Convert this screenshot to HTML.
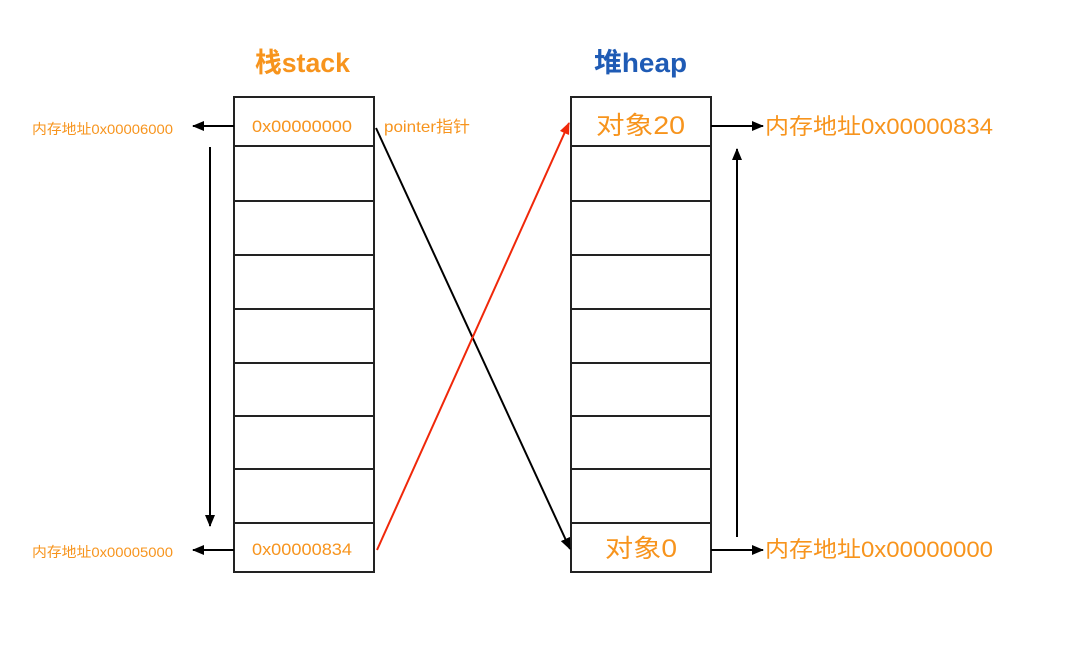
<!DOCTYPE html>
<html><head><meta charset="utf-8"><style>
html,body{margin:0;padding:0;background:#fff;width:1068px;height:654px;overflow:hidden}
svg text{font-family:"Liberation Sans","Noto Sans CJK SC",sans-serif}
</style></head><body>
<svg width="1068" height="654" viewBox="0 0 1068 654" xmlns="http://www.w3.org/2000/svg">
<defs>
<marker id="a" markerWidth="12" markerHeight="10" refX="11" refY="5" orient="auto" markerUnits="userSpaceOnUse"><path d="M0,0 L12,5 L0,10 z" fill="#000"/></marker>
<marker id="r" markerWidth="12" markerHeight="10" refX="11" refY="5" orient="auto" markerUnits="userSpaceOnUse"><path d="M0,0 L12,5 L0,10 z" fill="#f0280a"/></marker>
</defs>
<g fill="none" stroke="#222" stroke-width="2">
<rect x="234" y="97" width="140" height="475"/>
<rect x="571" y="97" width="140" height="475"/>
<path d="M234 146H374M234 201H374M234 255H374M234 309H374M234 363H374M234 416H374M234 469H374M234 523H374"/>
<path d="M571 146H711M571 201H711M571 255H711M571 309H711M571 363H711M571 416H711M571 469H711M571 523H711"/>
</g>
<g stroke="#000" stroke-width="2" fill="none">
<line x1="234" y1="126" x2="193" y2="126" marker-end="url(#a)"/>
<line x1="234" y1="550" x2="193" y2="550" marker-end="url(#a)"/>
<line x1="210" y1="147" x2="210" y2="526" marker-end="url(#a)"/>
<line x1="711" y1="126" x2="763" y2="126" marker-end="url(#a)"/>
<line x1="711" y1="550" x2="763" y2="550" marker-end="url(#a)"/>
<line x1="737" y1="537" x2="737" y2="149" marker-end="url(#a)"/>
<line x1="376" y1="128" x2="570" y2="549" marker-end="url(#a)"/>
</g>
<line x1="377" y1="550" x2="569" y2="123" stroke="#f0280a" stroke-width="2" marker-end="url(#r)"/>
<g fill="#f7941d">
<text x="255" y="72" font-size="27" font-weight="bold" textLength="95" lengthAdjust="spacingAndGlyphs">栈stack</text>
<text x="252" y="132" font-size="17" textLength="100" lengthAdjust="spacingAndGlyphs">0x00000000</text>
<text x="252" y="555" font-size="17" textLength="100" lengthAdjust="spacingAndGlyphs">0x00000834</text>
<text x="384" y="132" font-size="16" textLength="86" lengthAdjust="spacingAndGlyphs">pointer指针</text>
<text x="32" y="134" font-size="14" textLength="141" lengthAdjust="spacingAndGlyphs">内存地址0x00006000</text>
<text x="32" y="557" font-size="14" textLength="141" lengthAdjust="spacingAndGlyphs">内存地址0x00005000</text>
<text x="596" y="134" font-size="25" textLength="89" lengthAdjust="spacingAndGlyphs">对象20</text>
<text x="605" y="557" font-size="25" textLength="72" lengthAdjust="spacingAndGlyphs">对象0</text>
<text x="765" y="134" font-size="22" textLength="228" lengthAdjust="spacingAndGlyphs">内存地址0x00000834</text>
<text x="765" y="557" font-size="22" textLength="228" lengthAdjust="spacingAndGlyphs">内存地址0x00000000</text>
</g>
<text x="594" y="72" font-size="27" font-weight="bold" fill="#1f5bb5" textLength="93" lengthAdjust="spacingAndGlyphs">堆heap</text>
</svg>
</body></html>
